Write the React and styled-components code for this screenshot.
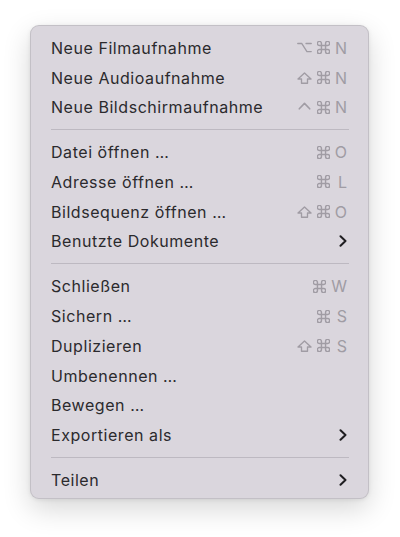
import React from "react";
import styled, { createGlobalStyle } from "styled-components";

const Global = createGlobalStyle`
  html, body { margin: 0; padding: 0; background: #ffffff; }
  body { font-family: "Inter", "Liberation Sans", "DejaVu Sans", sans-serif; -webkit-font-smoothing: antialiased; }
  * { box-sizing: border-box; }
`;

const Page = styled.div`
  width: 400px;
  height: 537px;
  padding: 25px 0 0 30px;
  background: #ffffff;
`;

const Menu = styled.div`
  width: 339px;
  height: 474px;
  padding: 7px 19px 5px 20px;
  background: #dad6dd;
  border: 1px solid rgba(0, 0, 0, 0.1);
  border-radius: 9px;
  box-shadow: 0 10px 28px rgba(0, 0, 0, 0.16), 0 1px 4px rgba(0, 0, 0, 0.08);
  display: flex;
  flex-direction: column;
`;

const Row = styled.div`
  height: 29.77px;
  flex: none;
  display: flex;
  align-items: center;
  justify-content: space-between;
  padding: 0 2px 0 0;
  font-size: 16px;
  color: #2b2a2d;
  letter-spacing: 0.55px;
`;

const Label = styled.span`
  white-space: nowrap;
`;

const Shortcut = styled.span`
  display: flex;
  align-items: center;
  gap: 4px;
  color: #a09ca4;
`;

const ModSlot = styled.span`
  display: inline-flex;
  justify-content: center;
  align-items: center;
  width: 15px;
  height: 14px;
  color: #a09ca4;
`;

const Key = styled.span`
  display: inline-block;
  min-width: 12px;
  text-align: right;
  letter-spacing: 0;
`;

const Separator = styled.div`
  height: 15px;
  flex: none;
  display: flex;
  align-items: center;
  &::after {
    content: "";
    display: block;
    width: 100%;
    height: 1px;
    background: #bdb9c1;
  }
`;

const icon = { fill: "none", stroke: "currentColor", strokeLinecap: "round", strokeLinejoin: "round" };

const OptionIcon = () => (
  <svg width="16" height="11" viewBox="0 0 16 11">
    <path d="M0.8 1.2H5L10.6 9.8H15.2M9.6 1.2H15.2" {...icon} strokeWidth="1.4" />
  </svg>
);

const ShiftIcon = () => (
  <svg width="15" height="12" viewBox="0 0 15 12">
    <path d="M7.5 0.9L14 7H10.5V11.2H4.5V7H1Z" {...icon} strokeWidth="1.35" />
  </svg>
);

const ControlIcon = () => (
  <svg width="13" height="12" viewBox="0 0 13 12">
    <path d="M1.3 7.8L6.5 2.4L11.7 7.8" {...icon} strokeWidth="1.6" />
  </svg>
);

const CommandIcon = () => (
  <svg width="13" height="13" viewBox="2.5 2.5 19 19">
    <path
      d="M15 6v12a3 3 0 1 0 3-3H6a3 3 0 1 0 3 3V6a3 3 0 1 0-3 3h12a3 3 0 1 0-3-3"
      {...icon}
      strokeWidth="2.1"
    />
  </svg>
);

const modIcons = { opt: OptionIcon, shift: ShiftIcon, ctrl: ControlIcon, cmd: CommandIcon };

const Chevron = () => (
  <svg width="8" height="12" viewBox="0 0 8 12">
    <polyline points="1.5,1.2 6.5,6 1.5,10.8" fill="none" stroke="#1f1e21" strokeWidth="2" strokeLinecap="round" strokeLinejoin="round" />
  </svg>
);

const items = [
  { label: "Neue Filmaufnahme", mods: ["opt", "cmd"], key: "N" },
  { label: "Neue Audioaufnahme", mods: ["shift", "cmd"], key: "N" },
  { label: "Neue Bildschirmaufnahme", mods: ["ctrl", "cmd"], key: "N" },
  { sep: true },
  { label: "Datei öffnen …", mods: ["cmd"], key: "O" },
  { label: "Adresse öffnen …", mods: ["cmd"], key: "L" },
  { label: "Bildsequenz öffnen …", mods: ["shift", "cmd"], key: "O" },
  { label: "Benutzte Dokumente", sub: true },
  { sep: true },
  { label: "Schließen", mods: ["cmd"], key: "W" },
  { label: "Sichern …", mods: ["cmd"], key: "S" },
  { label: "Duplizieren", mods: ["shift", "cmd"], key: "S" },
  { label: "Umbenennen …" },
  { label: "Bewegen …" },
  { label: "Exportieren als", sub: true },
  { sep: true },
  { label: "Teilen", sub: true },
];

export default function App() {
  return (
    <>
      <Global />
      <Page>
        <Menu>
          {items.map((it, i) =>
            it.sep ? (
              <Separator key={i} />
            ) : (
              <Row key={i}>
                <Label>{it.label}</Label>
                {it.sub ? (
                  <Chevron />
                ) : it.key ? (
                  <Shortcut>
                    {it.mods.map((m) => {
                      const Icon = modIcons[m];
                      return (
                        <ModSlot key={m}>
                          <Icon />
                        </ModSlot>
                      );
                    })}
                    <Key>{it.key}</Key>
                  </Shortcut>
                ) : null}
              </Row>
            )
          )}
        </Menu>
      </Page>
    </>
  );
}
